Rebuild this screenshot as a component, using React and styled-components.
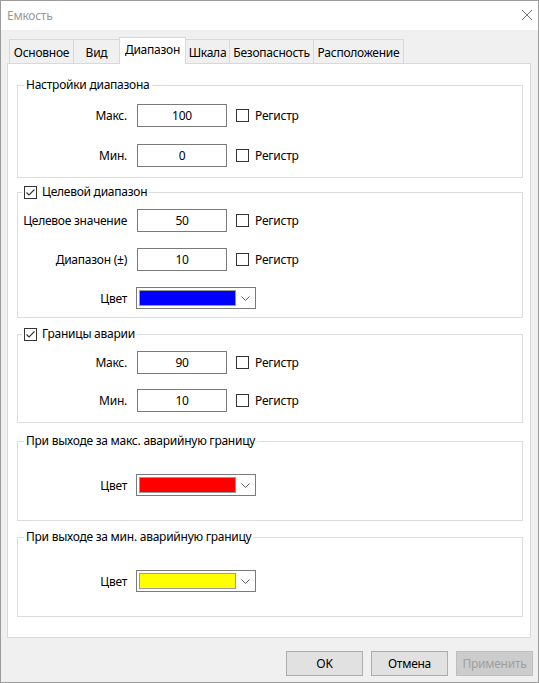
import styled, { createGlobalStyle } from 'styled-components';

const Global = createGlobalStyle`
  html, body { margin: 0; padding: 0; background: #fff; }
  body {
    font-family: "Noto Sans", "Segoe UI", sans-serif;
    font-size: 12px;
    letter-spacing: -0.25px;
    color: #000;
  }
  * { box-sizing: border-box; }
`;

const Window = styled.div`
  width: 539px;
  height: 683px;
  border: 1px solid #9b9b9b;
  background: #f0f0f0;
  display: flex;
  flex-direction: column;
`;

const TitleBar = styled.div`
  height: 29px;
  flex: none;
  background: #fff;
  display: flex;
  align-items: center;
  justify-content: space-between;
  padding: 0 5px 0 6px;
  color: #999;
`;

const Close = styled.svg`
  width: 12px;
  height: 12px;
  margin-top: -1px;
`;

const Content = styled.div`
  flex: 1;
  display: flex;
  flex-direction: column;
  padding: 9px 7px 0 6px;
  min-height: 0;
`;

const TabStrip = styled.div`
  display: flex;
  align-items: flex-end;
  height: 24px;
  margin-left: 2px;
  flex: none;
`;

const Tab = styled.div`
  position: relative;
  flex: none;
  width: ${p => p.$w}px;
  height: ${p => (p.$active ? 27 : 24)}px;
  margin-left: ${p => (p.$first ? 0 : -1)}px;
  margin-bottom: ${p => (p.$active ? -1 : 0)}px;
  border: 1px solid #d9d9d9;
  border-bottom: none;
  background: ${p => (p.$active ? '#fff' : '#f0f0f0')};
  z-index: ${p => (p.$active ? 2 : 1)};
  display: flex;
  align-items: ${p => (p.$active ? 'flex-start' : 'center')};
  padding-top: ${p => (p.$active ? 3 : 1)}px;
  justify-content: center;
  white-space: nowrap;
`;

const Panel = styled.div`
  flex: 1;
  background: #fff;
  border: 1px solid #d9d9d9;
  padding: 0 7px 0 9px;
  display: flex;
  flex-direction: column;
`;

const Group = styled.fieldset`
  margin: ${p => p.$mt}px 0 0;
  padding: 0;
  border: 1px solid #dcdcdc;
  min-width: 0;
`;

const Legend = styled.legend`
  margin-left: ${p => (p.$check ? 4 : 6)}px;
  padding: 0 2px;
  height: 16px;
  line-height: 16px;
  display: flex;
  align-items: center;
  gap: 5px;
  white-space: nowrap;
`;

const GroupBody = styled.div`
  display: flex;
  flex-direction: column;
  gap: ${p => p.$gap || 0}px;
  padding: ${p => p.$pt}px 0 ${p => p.$pb}px;
`;

const Row = styled.div`
  display: flex;
  align-items: center;
  height: ${p => (p.$combo ? 22 : 23)}px;
`;

const Label = styled.div`
  width: 109px;
  flex: none;
  text-align: right;
  margin-right: 10px;
  white-space: nowrap;
`;

const Field = styled.div`
  width: 90px;
  height: 23px;
  flex: none;
  border: 1px solid #7a7a7a;
  background: #fff;
  display: flex;
  align-items: center;
  justify-content: center;
`;

const Box = styled.span`
  width: 13px;
  height: 13px;
  flex: none;
  border: 1px solid #333;
  background: #fff;
  display: inline-flex;
  align-items: center;
  justify-content: center;
`;

const CheckLabel = styled.div`
  display: flex;
  align-items: center;
  gap: 6px;
  margin-left: 9px;
`;

const Combo = styled.div`
  width: 120px;
  height: 22px;
  flex: none;
  margin-left: -1px;
  border: 1px solid #7a7a7a;
  background: #fff;
  display: flex;
  align-items: stretch;
  padding: 2px 0 2px 2px;
`;

const Swatch = styled.div`
  width: 97px;
  border: 1px solid #9a9a9a;
  background: ${p => p.$color};
`;

const Arrow = styled.div`
  flex: 1;
  display: flex;
  align-items: center;
  justify-content: center;
`;

const Footer = styled.div`
  flex: none;
  display: flex;
  justify-content: flex-end;
  gap: 8px;
  padding: 13px 5px 6px 0;
`;

const Button = styled.div`
  width: 77px;
  height: 25px;
  border: 1px solid ${p => (p.$disabled ? '#bfbfbf' : '#adadad')};
  background: ${p => (p.$disabled ? '#cccccc' : '#e1e1e1')};
  color: ${p => (p.$disabled ? '#a0a0a0' : '#000')};
  display: flex;
  align-items: center;
  justify-content: center;
`;

const Check = ({ checked }) => (
  <Box>
    {checked && (
      <svg width="11" height="11" viewBox="0 0 11 11">
        <path d="M1.5 5.5 L4 8 L9.5 2.5" fill="none" stroke="#333" strokeWidth="1.1" />
      </svg>
    )}
  </Box>
);

const InputRow = ({ label, value }) => (
  <Row>
    <Label>{label}</Label>
    <Field>{value}</Field>
    <CheckLabel>
      <Check />
      Регистр
    </CheckLabel>
  </Row>
);

const ColorRow = ({ color }) => (
  <Row $combo>
    <Label>Цвет</Label>
    <Combo>
      <Swatch $color={color} />
      <Arrow>
        <svg width="9" height="5" viewBox="0 0 9 5">
          <path d="M0.5 0.5 L4.5 4.5 L8.5 0.5" fill="none" stroke="#606060" strokeWidth="1" />
        </svg>
      </Arrow>
    </Combo>
  </Row>
);

const tabs = [
  { label: 'Основное', w: 65 },
  { label: 'Вид', w: 47 },
  { label: 'Диапазон', w: 67, active: true },
  { label: 'Шкала', w: 45 },
  { label: 'Безопасность', w: 85 },
  { label: 'Расположение', w: 91 }
];

export default function App() {
  return (
    <>
      <Global />
      <Window>
        <TitleBar>
          Емкость
          <Close viewBox="0 0 12 12">
            <path d="M1 1 L11 11 M11 1 L1 11" stroke="#777" strokeWidth="1" />
          </Close>
        </TitleBar>
        <Content>
          <TabStrip>
            {tabs.map((t, i) => (
              <Tab key={t.label} $w={t.w} $active={t.active} $first={i === 0}>
                {t.label}
              </Tab>
            ))}
          </TabStrip>
          <Panel>
            <Group $mt={13}>
              <Legend>Настройки диапазона</Legend>
              <GroupBody $pt={11} $pb={10} $gap={17}>
                <InputRow label="Макс." value="100" />
                <InputRow label="Мин." value="0" />
              </GroupBody>
            </Group>

            <Group $mt={6}>
              <Legend $check>
                <Check checked />
                Целевой диапазон
              </Legend>
              <GroupBody $pt={9} $pb={8} $gap={16}>
                <InputRow label="Целевое значение" value="50" />
                <InputRow label="Диапазон (±)" value="10" />
                <ColorRow color="#0000ff" />
              </GroupBody>
            </Group>

            <Group $mt={8}>
              <Legend $check>
                <Check checked />
                Границы аварии
              </Legend>
              <GroupBody $pt={9} $pb={10} $gap={15}>
                <InputRow label="Макс." value="90" />
                <InputRow label="Мин." value="10" />
              </GroupBody>
            </Group>

            <Group $mt={10}>
              <Legend>При выходе за макс. аварийную границу</Legend>
              <GroupBody $pt={25} $pb={24}>
                <ColorRow color="#ff0000" />
              </GroupBody>
            </Group>

            <Group $mt={8}>
              <Legend>При выходе за мин. аварийную границу</Legend>
              <GroupBody $pt={25} $pb={24}>
                <ColorRow color="#ffff00" />
              </GroupBody>
            </Group>
          </Panel>
        </Content>
        <Footer>
          <Button>OK</Button>
          <Button>Отмена</Button>
          <Button $disabled>Применить</Button>
        </Footer>
      </Window>
    </>
  );
}
